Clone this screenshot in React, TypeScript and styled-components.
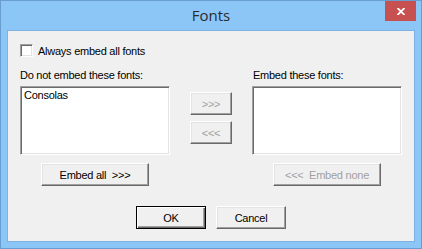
import React from "react";
import styled, { createGlobalStyle, css } from "styled-components";

const GlobalStyle = createGlobalStyle`
    * { box-sizing: border-box; }
    html, body { margin: 0; padding: 0; background: #8bc6f7; }
    body {
        font-family: "Liberation Sans", Arial, sans-serif;
        font-size: 11px;
        letter-spacing: -0.25px;
        color: #000;
    }
`;

const Window = styled.div`
    width: 422px;
    height: 249px;
    border: 1px solid #6a9ed0;
    background: #8bc6f7;
    padding: 0 6px 6px 6px;
    display: flex;
    flex-direction: column;
`;

const TitleBar = styled.div`
    height: 29px;
    display: grid;
    grid-template-columns: 1fr auto 1fr;
    margin: 0 -6px;
`;

const Title = styled.div`
    grid-column: 2;
    align-self: center;
    font-family: "Open Sans", "Noto Sans", sans-serif;
    font-size: 15px;
    letter-spacing: 0;
    color: #2b2b2b;
    padding-bottom: 1px;
`;

const CloseButton = styled.div`
    justify-self: end;
    width: 31px;
    height: 20px;
    margin-right: 5px;
    background: #c75050;
    display: flex;
    align-items: center;
    justify-content: center;
`;

const Client = styled.div`
    flex: 1;
    border: 1px solid #7eb2e3;
    background: #f0f0f0;
    padding: 13px 12px 0 12px;
    display: flex;
    flex-direction: column;
    overflow: hidden;
`;

const CheckRow = styled.label`
    display: flex;
    align-items: center;
    gap: 5px;
    height: 13px;
`;

const sunken = css`
    background: #fff;
    border: 1px solid;
    border-color: #a0a0a0 #fff #fff #a0a0a0;
    box-shadow: inset 1px 1px #696969, inset -1px -1px #e3e3e3;
`;

const CheckBox = styled.span`
    ${sunken}
    width: 13px;
    height: 13px;
`;

const Panes = styled.div`
    display: grid;
    grid-template-columns: 150px 42px 150px;
    column-gap: 20px;
    margin-top: 12px;
`;

const Caption = styled.div<{ $col: number; $indent?: number }>`
    grid-row: 1;
    grid-column: ${(p) => p.$col};
    height: 13px;
    line-height: 13px;
    margin-bottom: 4px;
    padding-left: ${(p) => p.$indent ?? 0}px;
    white-space: nowrap;
`;

const ListBox = styled.div<{ $col: number }>`
    ${sunken}
    grid-row: 2;
    grid-column: ${(p) => p.$col};
    height: 69px;
    padding: 2px 3px;
    line-height: 13px;
`;

const MoveColumn = styled.div`
    grid-row: 2;
    grid-column: 2;
    display: flex;
    flex-direction: column;
    gap: 6px;
    padding-top: 6px;
`;

const Button = styled.button<{ $width: number; $default?: boolean }>`
    width: ${(p) => p.$width}px;
    height: 23px;
    padding: 0;
    background: #f0f0f0;
    font-family: "Liberation Sans", Arial, sans-serif;
    font-size: 11px;
    letter-spacing: -0.25px;
    color: #000;
    white-space: pre;
    border: 1px solid;
    border-color: #fff #696969 #696969 #fff;
    box-shadow: inset -1px -1px #a0a0a0, inset 1px 1px #e3e3e3;
    &:disabled {
        color: #a0a0a0;
    }
    ${(p) =>
        p.$default &&
        css`
            border-color: #000;
            box-shadow: inset 1px 1px #fff, inset -1px -1px #696969, inset -2px -2px #a0a0a0;
        `}
`;

const EmbedRow = styled.div`
    display: grid;
    grid-template-columns: 150px 150px;
    justify-content: space-between;
    justify-items: center;
    margin-top: 8px;
`;

const DialogButtons = styled.div`
    display: flex;
    justify-content: center;
    gap: 10px;
    margin-top: 20px;
`;

export default function App() {
    return (
        <>
            <GlobalStyle />
            <Window>
                <TitleBar>
                    <Title>Fonts</Title>
                    <CloseButton>
                        <svg width="8" height="7" viewBox="0 0 8 7">
                            <path d="M0.5 0 L7.5 7 M7.5 0 L0.5 7" stroke="#fff" strokeWidth="1.8" />
                        </svg>
                    </CloseButton>
                </TitleBar>
                <Client>
                    <CheckRow>
                        <CheckBox />
                        Always embed all fonts
                    </CheckRow>
                    <Panes>
                        <Caption $col={1}>Do not embed these fonts:</Caption>
                        <ListBox $col={1}>Consolas</ListBox>
                        <MoveColumn>
                            <Button $width={42} disabled>&gt;&gt;&gt;</Button>
                            <Button $width={42} disabled>&lt;&lt;&lt;</Button>
                        </MoveColumn>
                        <Caption $col={3} $indent={1}>Embed these fonts:</Caption>
                        <ListBox $col={3} />
                    </Panes>
                    <EmbedRow>
                        <Button $width={108}>{"Embed all  >>>"}</Button>
                        <Button $width={108} disabled>{"<<<  Embed none"}</Button>
                    </EmbedRow>
                    <DialogButtons>
                        <Button $width={70} $default>OK</Button>
                        <Button $width={70}>Cancel</Button>
                    </DialogButtons>
                </Client>
            </Window>
        </>
    );
}
